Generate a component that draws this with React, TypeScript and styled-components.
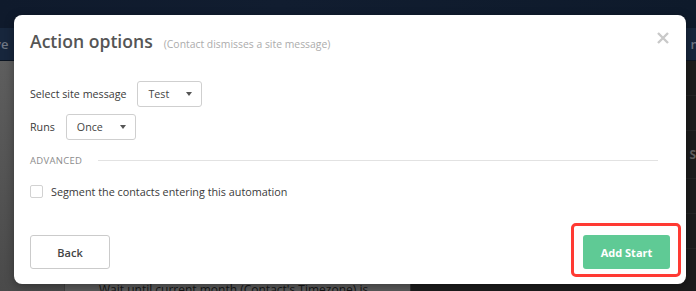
import styled, { createGlobalStyle } from 'styled-components';

const GlobalStyle = createGlobalStyle`
  html, body {
    margin: 0;
    padding: 0;
    background: #1b1b1b;
  }
  body {
    font-family: 'Open Sans', 'Liberation Sans', sans-serif;
  }
`;

const Page = styled.div`
  position: relative;
  width: 696px;
  height: 291px;
  overflow: hidden;
  display: flex;
  flex-direction: column;
  background: #1b1b1b;
`;

/* ---------- background app (dimmed behind the modal) ---------- */

const TopBar = styled.div`
  height: 28px;
  background: linear-gradient(90deg, #0f1a2c, #111d30 40%, #0e1a2b);
`;

const SubBar = styled.div`
  height: 32px;
  background: #17263c;
  display: flex;
  align-items: center;
  justify-content: space-between;
  color: #6f7784;
  font-size: 13px;
  font-weight: 600;
  border-bottom: 1px solid #0c1522;
`;

const SubBarText = styled.span<{ $side: 'left' | 'right' }>`
  ${({ $side }) => ($side === 'left' ? 'margin-left: -6px;' : 'margin-right: -8px;')}
`;

const Body = styled.div`
  flex: 1;
  display: flex;
`;

const Sidebar = styled.div`
  width: 64px;
  background: linear-gradient(180deg, #5e5e5e, #4a4a4a);
  border-right: 1px solid #3e3e3e;
`;

const Canvas = styled.div`
  width: 345px;
  background: #595959;
  display: flex;
  flex-direction: column;
  justify-content: flex-end;
  border-right: 1px solid #2e2e2e;
`;

const CanvasText = styled.div`
  padding-left: 34px;
  font-size: 12px;
  color: #151515;
  line-height: 14px;
  margin-bottom: -6px;
`;

const RightPanel = styled.div`
  flex: 1;
  background: #1c1c1c;
  display: flex;
  flex-direction: column;
`;

const PanelRow = styled.div<{ $height?: number }>`
  height: ${({ $height }) => $height ?? 34}px;
  border-bottom: 1px solid #252525;
  display: flex;
  align-items: center;
  justify-content: flex-end;
  color: #5f5f5f;
  font-size: 12px;
  font-weight: 700;
`;

/* ---------- modal ---------- */

const Modal = styled.div`
  position: absolute;
  left: 14px;
  top: 15px;
  width: 672px;
  height: 269px;
  box-sizing: border-box;
  background: #fff;
  border-radius: 8px;
  box-shadow: 0 2px 10px rgba(0, 0, 0, 0.35);
  padding: 14px 28px 15px 16px;
  display: flex;
  flex-direction: column;
`;

const Header = styled.div`
  display: flex;
  align-items: baseline;
  height: 24px;
`;

const Title = styled.h2`
  margin: 0;
  font-size: 17.6px;
  line-height: 24px;
  font-weight: 600;
  color: #555;
`;

const Subtitle = styled.span`
  margin-left: 11px;
  font-size: 10.4px;
  color: #acacac;
`;

const Close = styled.button`
  position: absolute;
  top: 16px;
  right: 16px;
  width: 14px;
  height: 14px;
  padding: 0;
  border: 0;
  background: none;
  display: flex;
`;

const Form = styled.div`
  margin-top: 28px;
  display: flex;
  flex-direction: column;
`;

const FieldRow = styled.div<{ $gap?: number }>`
  display: flex;
  align-items: center;
  gap: 11px;
  margin-bottom: ${({ $gap }) => $gap ?? 0}px;
`;

const Label = styled.span`
  font-size: 10.7px;
  color: #3a3a3a;
`;

const Select = styled.div<{ $width: number }>`
  width: ${({ $width }) => $width}px;
  height: 26px;
  box-sizing: border-box;
  border: 1px solid #cfcfcf;
  border-radius: 3px;
  display: flex;
  align-items: center;
  justify-content: space-between;
  padding: 0 9px 0 10px;
  font-size: 10.7px;
  color: #444;
`;

const Caret = styled.span`
  width: 0;
  height: 0;
  border-left: 3.5px solid transparent;
  border-right: 3.5px solid transparent;
  border-top: 4px solid #555;
`;

const Section = styled.div`
  margin-top: 13px;
  height: 14px;
  display: flex;
  align-items: center;
  gap: 16px;
`;

const SectionTitle = styled.span`
  font-size: 9.5px;
  letter-spacing: 0.3px;
  color: #8c8c8c;
`;

const Rule = styled.div`
  flex: 1;
  height: 1px;
  background: #e2e2e2;
`;

const CheckRow = styled.label`
  margin-top: 17px;
  display: flex;
  align-items: center;
  gap: 8px;
  height: 14px;
  font-size: 10.8px;
  color: #3a3a3a;
`;

const Checkbox = styled.span`
  width: 13px;
  height: 13px;
  box-sizing: border-box;
  border: 1px solid #d2d2d2;
  border-radius: 2px;
`;

const Footer = styled.div`
  margin-top: auto;
  display: flex;
  justify-content: space-between;
  align-items: center;
  margin-right: -12px;
`;

const Button = styled.button<{ $primary?: boolean }>`
  height: 34px;
  box-sizing: border-box;
  border-radius: 3px;
  font-family: inherit;
  font-size: 11px;
  font-weight: 600;
  cursor: pointer;
  ${({ $primary }) =>
    $primary
      ? `
    width: 87px;
    border: 0;
    background: #5fca95;
    color: #fff;
    font-weight: 700;
  `
      : `
    width: 80px;
    border: 1px solid #cbcbcb;
    background: #fff;
    color: #444;
  `}
`;

const Highlight = styled.span`
  position: relative;
  display: inline-flex;

  &::after {
    content: '';
    position: absolute;
    left: -12px;
    right: -11px;
    top: -12px;
    bottom: -8px;
    border: 3px solid #ff3a33;
    border-radius: 5px;
    pointer-events: none;
  }
`;

export default function App() {
  return (
    <Page>
      <GlobalStyle />
      <TopBar />
      <SubBar>
        <SubBarText $side="left">ve</SubBarText>
        <SubBarText $side="right">nt</SubBarText>
      </SubBar>
      <Body>
        <Sidebar />
        <Canvas>
          <CanvasText>Wait until current month (Contact's Timezone) is</CanvasText>
        </Canvas>
        <RightPanel>
          <PanelRow />
          <PanelRow />
          <PanelRow $height={47}>S</PanelRow>
          <PanelRow />
          <PanelRow />
        </RightPanel>
      </Body>

      <Modal>
        <Header>
          <Title>Action options</Title>
          <Subtitle>(Contact dismisses a site message)</Subtitle>
        </Header>
        <Close aria-label="Close">
          <svg width="14" height="14" viewBox="0 0 14 14">
            <path d="M2 2 L12 12 M12 2 L2 12" stroke="#c9c9c9" strokeWidth="2.4" strokeLinecap="butt" />
          </svg>
        </Close>

        <Form>
          <FieldRow $gap={7}>
            <Label>Select site message</Label>
            <Select $width={65}>
              Test
              <Caret />
            </Select>
          </FieldRow>
          <FieldRow>
            <Label>Runs</Label>
            <Select $width={70}>
              Once
              <Caret />
            </Select>
          </FieldRow>
          <Section>
            <SectionTitle>ADVANCED</SectionTitle>
            <Rule />
          </Section>
          <CheckRow>
            <Checkbox />
            Segment the contacts entering this automation
          </CheckRow>
        </Form>

        <Footer>
          <Button>Back</Button>
          <Highlight>
            <Button $primary>Add Start</Button>
          </Highlight>
        </Footer>
      </Modal>
    </Page>
  );
}
